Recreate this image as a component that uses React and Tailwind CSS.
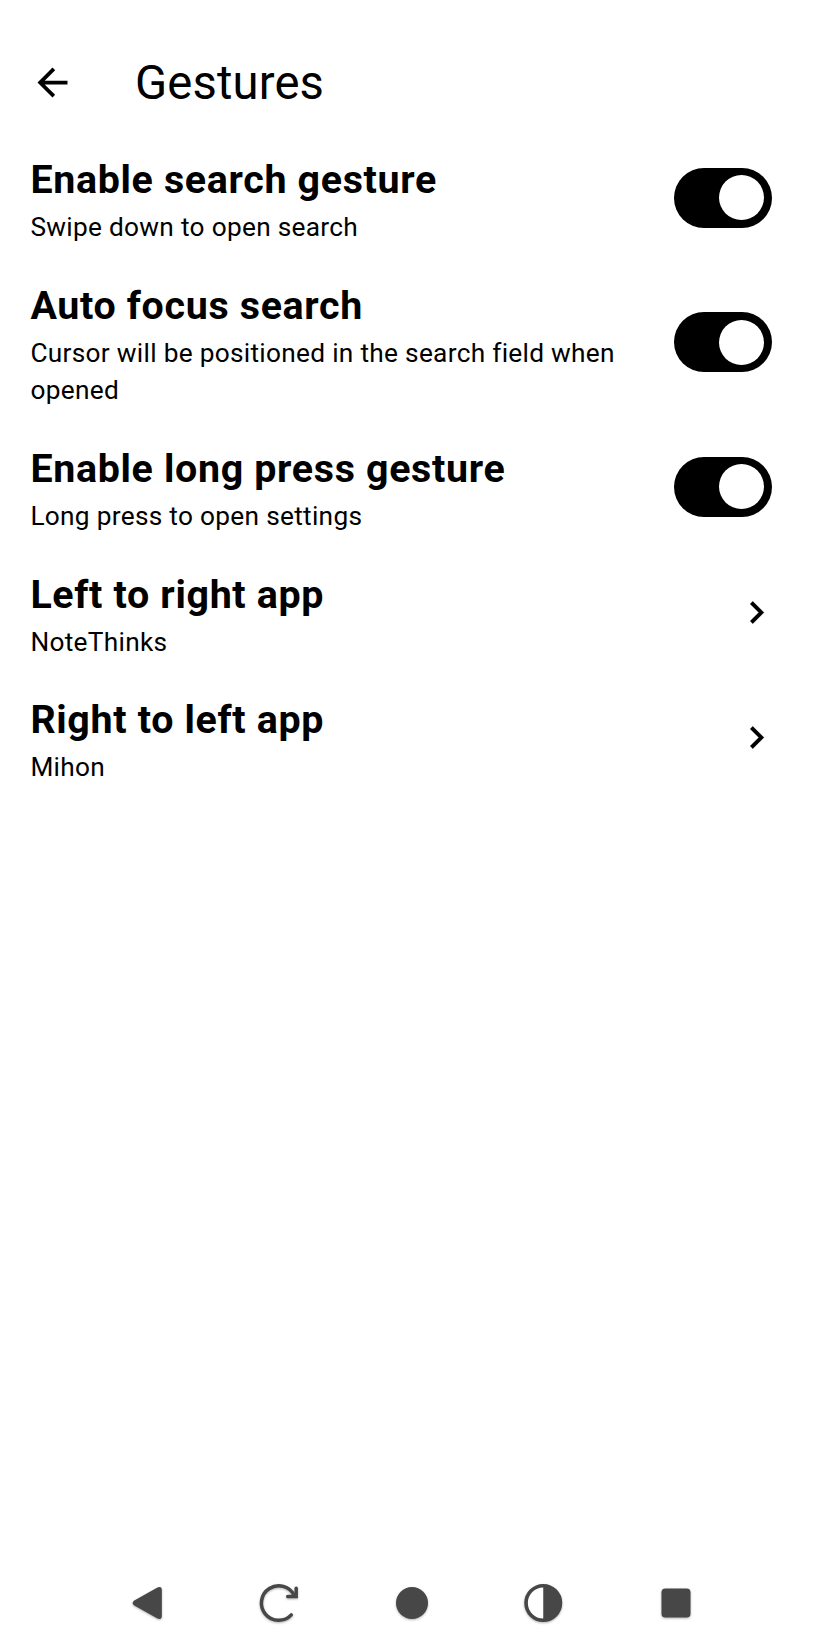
function Toggle() {
  return (
    <div className="mr-[52.5px] mb-px flex h-[60px] w-[97.5px] shrink-0 items-center justify-end rounded-full bg-black pr-[7.75px]">
      <div className="size-[45px] rounded-full bg-white" />
    </div>
  );
}

function Chevron() {
  return (
    <svg viewBox="0 0 24 24" className="mr-[45px] size-[45px] shrink-0" fill="#000">
      <path d="M8.59 16.59 13.17 12 8.59 7.41 10 6l6 6-6 6z" stroke="#000" strokeWidth="0.1" strokeLinejoin="round" />
    </svg>
  );
}

function Row({ title, detail, height, detailGap = "mt-[6.7px]", children }) {
  return (
    <div className={`flex items-center justify-between pl-[30.4px] ${height}`}>
      <div className="w-[600px] pt-[7.1px]">
        <h2 className="text-[39.4px] leading-[45px] font-bold tracking-[0.66px] whitespace-nowrap">{title}</h2>
        <p className={`text-[26.25px] leading-[37px] tracking-[0.29px] ${detailGap}`}>{detail}</p>
      </div>
      {children}
    </div>
  );
}

export default function App() {
  return (
    <div className="flex h-[1648px] w-[824px] flex-col bg-white font-['Roboto',sans-serif] text-black">
      <header className="flex h-[135px] items-center pt-[30px] pl-[30px]">
        <svg viewBox="0 0 24 24" className="size-[45px]" fill="#000">
          <path d="M20 11H7.83l5.59-5.59L12 4l-8 8 8 8 1.41-1.41L7.83 13H20v-2z" />
        </svg>
        <h1 className="ml-[60px] pt-[1px] text-[47.2px] leading-[60px] tracking-[0.15px]">Gestures</h1>
      </header>
      <main className="flex-1">
        <Row title="Enable search gesture" detail="Swipe down to open search" height="h-[126px]"><Toggle /></Row>
        <Row title="Auto focus search" detail="Cursor will be positioned in the search field when opened" height="h-[163px]"><Toggle /></Row>
        <Row title="Enable long press gesture" detail="Long press to open settings" height="h-[126px]"><Toggle /></Row>
        <Row title="Left to right app" detail="NoteThinks" height="h-[125px]" detailGap="mt-[7.5px] -mb-[0.8px]"><Chevron /></Row>
        <Row title="Right to left app" detail="Mihon" height="h-[125px]" detailGap="mt-[7.5px] -mb-[0.8px]"><Chevron /></Row>
      </main>
      <nav className="flex h-[90px] items-center justify-between pr-[123px] pl-[121px] text-[#474747]">
        <svg viewBox="0 0 50 50" className="size-[50px] drop-shadow-[0_1px_1px_rgba(0,0,0,0.3)]" fill="currentColor">
          <path d="M13.3 27.5 36 40.3q4.8 2 4.8-2.3V12q0-4.3-4.8-2.3L13.3 22.5q-3.4 2.5 0 5z" />
        </svg>
        <svg viewBox="0 0 50 50" className="size-[50px] drop-shadow-[0_1px_1px_rgba(0,0,0,0.3)]" fill="none" stroke="currentColor" strokeWidth="3.5" strokeLinecap="round">
          <path d="M37.3 36.9A17.3 17.3 0 1 1 40.3 17.5" />
          <path d="M42.2 10.2v8.2H33.7" />
        </svg>
        <svg viewBox="0 0 50 50" className="size-[50px] drop-shadow-[0_1px_1px_rgba(0,0,0,0.3)]" fill="currentColor">
          <circle cx="26" cy="25" r="16" />
        </svg>
        <svg viewBox="0 0 50 50" className="size-[50px] drop-shadow-[0_1px_1px_rgba(0,0,0,0.3)]" fill="currentColor">
          <circle cx="24.25" cy="25" r="17.2" fill="#fff" stroke="currentColor" strokeWidth="3.6" />
          <path d="M24.25 7a18 18 0 0 1 0 36z" />
        </svg>
        <svg viewBox="0 0 50 50" className="size-[50px] drop-shadow-[0_1px_1px_rgba(0,0,0,0.3)]" fill="currentColor">
          <rect x="10.5" y="10.5" width="29" height="29" rx="3.8" />
        </svg>
      </nav>
    </div>
  );
}
